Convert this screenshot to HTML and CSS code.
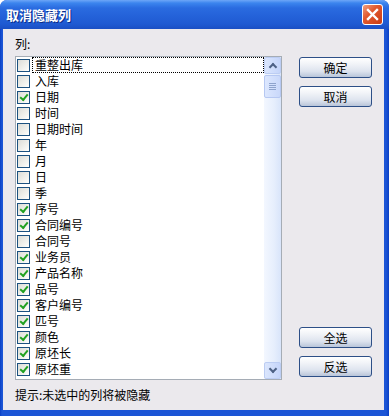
FILE: index.html
```html
<!DOCTYPE html>
<html>
	<head>
		<meta charset="UTF-8">
		<title>取消隐藏列</title>
		<link rel="stylesheet" href="styles.css">
	</head>
	<body>
		<div class="window">
			<div class="titlebar">
				<span class="title">取消隐藏列</span>
				<a href="javascript:;" class="close">
					<svg width="13" height="13" viewBox="0 0 13 13"><path d="M2 2 L11 11 M11 2 L2 11" stroke="#fff" stroke-width="2.4" stroke-linecap="square"/></svg>
				</a>
			</div>
			<div class="client">
				<div class="label">列:</div>
				<div class="main">
					<div class="listbox">
						<ul class="items">
							<li><span class="cb"></span><span class="txt focus">重整出库</span></li>
							<li><span class="cb"></span><span class="txt">入库</span></li>
							<li><span class="cb on"></span><span class="txt">日期</span></li>
							<li><span class="cb"></span><span class="txt">时间</span></li>
							<li><span class="cb"></span><span class="txt">日期时间</span></li>
							<li><span class="cb"></span><span class="txt">年</span></li>
							<li><span class="cb"></span><span class="txt">月</span></li>
							<li><span class="cb"></span><span class="txt">日</span></li>
							<li><span class="cb"></span><span class="txt">季</span></li>
							<li><span class="cb on"></span><span class="txt">序号</span></li>
							<li><span class="cb on"></span><span class="txt">合同编号</span></li>
							<li><span class="cb"></span><span class="txt">合同号</span></li>
							<li><span class="cb on"></span><span class="txt">业务员</span></li>
							<li><span class="cb on"></span><span class="txt">产品名称</span></li>
							<li><span class="cb on"></span><span class="txt">品号</span></li>
							<li><span class="cb on"></span><span class="txt">客户编号</span></li>
							<li><span class="cb on"></span><span class="txt">匹号</span></li>
							<li><span class="cb on"></span><span class="txt">颜色</span></li>
							<li><span class="cb on"></span><span class="txt">原坯长</span></li>
							<li><span class="cb on"></span><span class="txt">原坯重</span></li>
						</ul>
						<div class="scrollbar">
							<span class="sbtn up"></span>
							<div class="track">
								<span class="thumb"></span>
							</div>
							<span class="sbtn down"></span>
						</div>
					</div>
					<div class="buttons">
						<div class="group">
							<a href="javascript:;" class="btn">确定</a>
							<a href="javascript:;" class="btn">取消</a>
						</div>
						<div class="group">
							<a href="javascript:;" class="btn">全选</a>
							<a href="javascript:;" class="btn">反选</a>
						</div>
					</div>
				</div>
				<div class="hint">提示:未选中的列将被隐藏</div>
			</div>
		</div>
	</body>
</html>
```

FILE: styles.css
```css
*{
	margin: 0;
	padding: 0;
}
body{
	background: #fff;
	font-family: "Noto Sans CJK SC", "Liberation Sans", sans-serif;
	font-size: 12px;
	color: #000;
}
.window{
	width: 389px;
	height: 416px;
	display: flex;
	flex-direction: column;
	background: linear-gradient(to right, #0a3fc4 0, #1c55d6 2px, #1c55d6 386px, #0a3fc4 100%);
	border-radius: 7px 7px 0 0;
	overflow: hidden;
}
.titlebar{
	height: 29px;
	display: flex;
	align-items: center;
	justify-content: space-between;
	padding: 0 6px 0 6px;
	background: linear-gradient(to bottom, #6ea6f7 0, #3c85ee 3px, #2a6be0 8px, #2462d9 16px, #1f5ad2 24px, #1a4fc4 29px);
}
.titlebar .title{
	color: #fff;
	font-weight: bold;
	font-size: 13px;
	text-shadow: 1px 1px 0 #0a2d8a;
	letter-spacing: 0;
}
.titlebar .close{
	width: 19px;
	height: 19px;
	display: flex;
	align-items: center;
	justify-content: center;
	border: 1px solid #fff;
	border-radius: 3px;
	background: linear-gradient(135deg, #f0a080 0, #e2592f 40%, #c93c14 100%);
	margin-top: -1px;
}
.client{
	flex: 1;
	margin: 0 5px 6px 3px;
	padding: 7px 0 0 12px;
	background: #ebe9ed;
}
.label{
	line-height: 16px;
	height: 16px;
	margin-bottom: 4px;
}
.main{
	display: flex;
	gap: 17px;
}
.listbox{
	width: 265px;
	height: 322px;
	border: 1px solid #a5acb5;
	background: #fff;
	display: flex;
}
.items{
	flex: 1;
	list-style: none;
	overflow: hidden;
}
.items li{
	height: 16px;
	display: flex;
	align-items: center;
	padding-left: 1px;
}
.cb{
	width: 11px;
	height: 11px;
	border: 1px solid #1c5180;
	background: linear-gradient(135deg, #dcdcd7 0, #f4f4f0 70%, #fff 100%);
	position: relative;
	flex: none;
}
/*勾选的绿色对勾*/
.cb.on::after{
	content: "";
	position: absolute;
	left: 2px;
	top: 2px;
	width: 6px;
	height: 3px;
	border-left: 2px solid #21a121;
	border-bottom: 2px solid #21a121;
	transform: rotate(-50deg);
}
.txt{
	margin-left: 2px;
	padding: 0 2px;
	line-height: 14px;
	height: 14px;
	border: 1px solid transparent;
}
.txt.focus{
	flex: 1;
	border: 1px dotted #000;
}
.scrollbar{
	width: 17px;
	display: flex;
	flex-direction: column;
	background: linear-gradient(to right, #f3f7ff 0, #e6eefc 60%, #d8e4fa 100%);
}
.sbtn{
	width: 15px;
	height: 15px;
	border: 1px solid #bccdf3;
	border-radius: 2px;
	background: linear-gradient(to right, #dbe6fd, #c5d5fa);
	position: relative;
}
.sbtn::after{
	content: "";
	position: absolute;
	left: 5px;
	width: 4px;
	height: 4px;
	border-left: 2px solid #4d6185;
	border-top: 2px solid #4d6185;
}
.sbtn.up::after{
	top: 6px;
	transform: rotate(45deg);
}
.sbtn.down::after{
	top: 3px;
	transform: rotate(-135deg);
}
.track{
	flex: 1;
	padding-top: 1px;
}
.thumb{
	display: block;
	width: 15px;
	height: 21px;
	border: 1px solid #b6c8f2;
	border-radius: 2px;
	background: linear-gradient(to right, #dce7fe, #c9d8fa);
	position: relative;
}
.thumb::after{
	content: "";
	position: absolute;
	left: 4px;
	top: 7px;
	width: 7px;
	height: 1px;
	background: #8ea3cc;
	box-shadow: 0 2px 0 #8ea3cc, 0 4px 0 #8ea3cc, 0 6px 0 #8ea3cc;
}
.buttons{
	width: 73px;
	display: flex;
	flex-direction: column;
	justify-content: space-between;
	padding: 1px 0 3px 0;
}
.group{
	display: flex;
	flex-direction: column;
	gap: 8px;
}
.btn{
	display: block;
	height: 19px;
	line-height: 19px;
	text-align: center;
	color: #000;
	text-decoration: none;
	border: 1px solid #2d4f87;
	border-radius: 3px;
	background: linear-gradient(to bottom, #fff 0, #f2f4f8 30%, #dde3ee 70%, #b9c5d9 100%);
}
.hint{
	margin-top: 7px;
	line-height: 16px;
}
```
